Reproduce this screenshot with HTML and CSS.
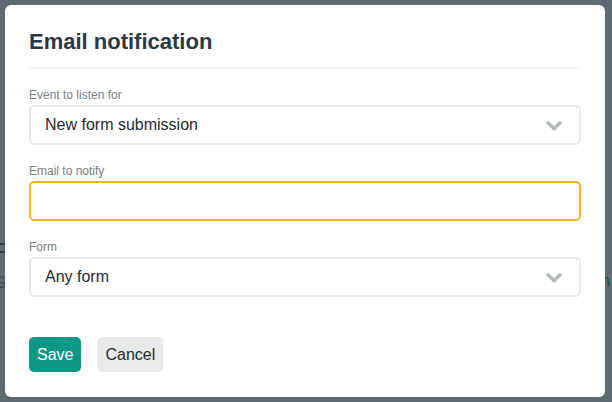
FILE: index.html
```html
<!DOCTYPE html>
<html>
<head>
<meta charset="utf-8">
<link rel="stylesheet" href="styles.css">
</head>
<body>
<div class="backdrop">
  <div class="bg-bits">
    <div class="bg-rule"></div>
    <div class="bg-rule"></div>
    <div class="bg-g">G</div>
    <div class="bg-n">n</div>
  </div>
  <div class="modal">
    <h1 class="title">Email notification</h1>
    <div class="field">
      <label class="label">Event to listen for</label>
      <div class="select">
        <span>New form submission</span>
        <svg class="chev" width="18" height="11" viewBox="0 0 18 11"><polyline points="2,2 9,8.5 16,2" fill="none" stroke="#b4b9bc" stroke-width="3.6" stroke-linecap="butt" stroke-linejoin="miter"/></svg>
      </div>
    </div>
    <div class="field">
      <label class="label">Email to notify</label>
      <div class="input focused"></div>
    </div>
    <div class="field">
      <label class="label">Form</label>
      <div class="select">
        <span>Any form</span>
        <svg class="chev" width="18" height="11" viewBox="0 0 18 11"><polyline points="2,2 9,8.5 16,2" fill="none" stroke="#b4b9bc" stroke-width="3.6" stroke-linecap="butt" stroke-linejoin="miter"/></svg>
      </div>
    </div>
    <div class="actions">
      <button class="btn btn-save">Save</button>
      <button class="btn btn-cancel">Cancel</button>
    </div>
  </div>
</div>
</body>
</html>
```
FILE: styles.css
```css
* { box-sizing: border-box; }
html, body { margin: 0; padding: 0; }
body {
  background: #606b70;
  font-family: "Liberation Sans", Arial, sans-serif;
  width: 612px;
  height: 402px;
  overflow: hidden;
}
.backdrop {
  position: relative;
  width: 612px;
  height: 402px;
  padding: 5px;
}
.bg-bits {
  position: absolute;
  left: 0; top: 0;
  width: 612px; height: 402px;
}
.bg-rule {
  position: absolute;
  left: 0;
  width: 5px;
  height: 2px;
  background: #2f3a3f;
}
.bg-rule:nth-child(1) { top: 243px; }
.bg-rule:nth-child(2) { top: 251px; }
.bg-g {
  position: absolute;
  left: -6px;
  top: 274px;
  font-size: 16px;
  color: #3f4a4f;
}
.bg-n {
  position: absolute;
  left: 601px;
  top: 272px;
  font-size: 16px;
  color: #0b4f48;
}
.modal {
  position: relative;
  width: 600px;
  height: 392px;
  background: #fff;
  border-radius: 6px;
  padding: 24px 24px;
  display: flex;
  flex-direction: column;
}
.title {
  margin: 0;
  font-size: 22px;
  line-height: 26px;
  font-weight: bold;
  color: #2b3940;
  padding-bottom: 12px;
  border-bottom: 2px solid #f1f2f2;
  margin-bottom: 19px;
}
.field {
  display: flex;
  flex-direction: column;
  margin-bottom: 19px;
}
.label {
  font-size: 12px;
  line-height: 14px;
  color: #7a7f82;
  margin-bottom: 3px;
}
.select, .input {
  height: 40px;
  border: 2px solid #e8e9e9;
  border-radius: 5px;
  display: flex;
  align-items: center;
  justify-content: space-between;
  padding: 0 16px 0 14px;
  font-size: 16px;
  color: #222b30;
}
.input.focused {
  border-color: #f5b41e;
}
.chev { display: block; margin-top: 1px; }
.actions {
  display: flex;
  gap: 16px;
  margin-top: 21px;
}
.btn {
  font-family: "Liberation Sans", Arial, sans-serif;
  font-size: 16px;
  height: 35px;
  border: none;
  border-radius: 5px;
  padding: 0 8px;
  cursor: pointer;
}
.btn-save {
  background: #0f9786;
  color: #fff;
}
.btn-cancel {
  background: #e8e9e9;
  color: #222b30;
}
```
